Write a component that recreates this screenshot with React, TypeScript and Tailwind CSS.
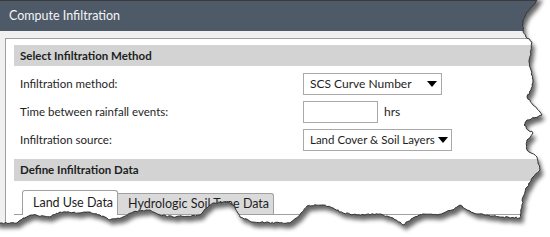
import React from 'react';

// rough outline of the torn paper edge (right side, then bottom, right to left)
const edgeKeys: [number, number][] = [
    [537, 0], [533, 6], [527, 12], [523, 20], [523, 30], [526, 37], [532, 42], [531, 50],
    [529, 62], [531, 70], [533, 80], [531, 90], [527, 97], [533, 105], [540, 112], [542, 115],
    [527, 120], [524, 125], [528, 130], [533, 133], [527, 140], [527, 150], [537, 157],
    [538, 163], [540, 170], [533, 177], [527, 187], [523, 197], [522, 207], [521, 213],
    [520, 218], [503, 217], [477, 214], [467, 210], [460, 205], [452, 210], [437, 215],
    [423, 214], [413, 218], [403, 225], [393, 218], [380, 214], [357, 215], [343, 213],
    [333, 208], [323, 205], [307, 206], [300, 215], [290, 223], [280, 223], [253, 222],
    [240, 217], [233, 205], [227, 202], [213, 203], [207, 208], [200, 215], [173, 217],
    [160, 215], [150, 210], [133, 212], [123, 217], [110, 220], [100, 215], [90, 212],
    [80, 213], [60, 212], [50, 217], [33, 215], [23, 218], [17, 223], [0, 223],
];

function rng(seed: number) {
    return () => {
        seed = (seed * 1664525 + 1013904223) % 4294967296;
        return seed / 4294967296;
    };
}

function roughen(keys: [number, number][]) {
    const rand = rng(7);
    const out: [number, number][] = [keys[0]];
    for (let i = 1; i < keys.length; i++) {
        const [x0, y0] = keys[i - 1];
        const [x1, y1] = keys[i];
        const len = Math.hypot(x1 - x0, y1 - y0);
        const n = Math.max(1, Math.round(len / 2));
        for (let k = 1; k <= n; k++) {
            const t = k / n;
            const jx = k === n ? 0 : (rand() - 0.5) * 1.4;
            const jy = k === n ? 0 : (rand() - 0.5) * 1.4;
            out.push([x0 + (x1 - x0) * t + jx, y0 + (y1 - y0) * t + jy]);
        }
    }
    return out;
}

const edge = roughen(edgeKeys);
const edgeD = 'M' + edge.map(([x, y]) => `${x.toFixed(1)} ${y.toFixed(1)}`).join(' L');
const shapeD = `M-5 -5 L540 -5 L${edge.map(([x, y]) => `${x.toFixed(1)} ${y.toFixed(1)}`).join(' L')} L-5 223 Z`;

function TornEdge() {
    return (
        <svg className="absolute inset-0 pointer-events-none" width="550" height="237" viewBox="0 0 550 237">
            <defs>
                <mask id="outside">
                    <rect x="0" y="0" width="550" height="237" fill="white" />
                    <path d={shapeD} fill="black" />
                </mask>
                <filter id="blur" x="-10%" y="-10%" width="120%" height="120%">
                    <feGaussianBlur stdDeviation="2.2" />
                </filter>
            </defs>
            <path d={`M0 0 H550 V237 H0 Z ${shapeD}`} fill="white" fillRule="evenodd" />
            <g mask="url(#outside)">
                <path d={shapeD} fill="black" opacity="0.6" transform="translate(3 5)" filter="url(#blur)" />
            </g>
            <path d={edgeD} fill="none" stroke="#333" strokeWidth="1" />
        </svg>
    );
}

function Caret() {
    return (
        <svg width="10" height="6" viewBox="0 0 10 6" className="shrink-0">
            <path d="M0 0 H10 L5 6 Z" fill="#000" />
        </svg>
    );
}

export default function App() {
    return (
        <div className="relative w-[550px] h-[237px] overflow-hidden bg-[#f0f0f0] font-['Segoe_UI','Lato',sans-serif] text-[#1e1e1e] whitespace-nowrap">
            {/* Barra de título */}
            <div className="h-[31px] bg-[#4f5a69] border-t border-[#3a3a3a] pl-[9px] flex items-center text-[12.5px] text-[#f4f4f4]">
                Compute Infiltration
            </div>

            <div className="pt-[7px] pl-[5px]">
                <div className="h-[200px] bg-white border-l border-t border-[#a0a0a0] pl-[8px] pt-[6px]">
                    <div className="h-[21px] bg-[#d3d3d3] px-[6px] flex items-center text-[11.5px] font-bold">
                        Select Infiltration Method
                    </div>

                    <div className="mt-[7px] pl-[6px] flex items-center text-[11.5px]">
                        <div className="w-[283px]">Infiltration method:</div>
                        <div className="w-[139px] h-[22px] border border-[#a9a9a9] bg-white flex items-center justify-between pl-[6px] pr-[4px] text-[12px]">
                            <span>SCS Curve Number</span>
                            <Caret />
                        </div>
                    </div>

                    <div className="mt-[6px] pl-[6px] flex items-center text-[11.5px]">
                        <div className="w-[283px]">Time between rainfall events:</div>
                        <div className="w-[75px] h-[22px] border border-[#a9a9a9] bg-white" />
                        <div className="ml-[6px] text-[12px]">hrs</div>
                    </div>

                    <div className="mt-[6px] pl-[6px] flex items-center text-[11.5px]">
                        <div className="w-[283px]">Infiltration source:</div>
                        <div className="w-[149px] h-[22px] border border-[#a9a9a9] bg-white flex items-center justify-between pl-[6px] pr-[3px] text-[11.5px]">
                            <span>Land Cover &amp; Soil Layers</span>
                            <Caret />
                        </div>
                    </div>

                    <div className="mt-[8px] h-[22px] bg-[#d3d3d3] px-[6px] flex items-center text-[11.5px] font-bold">
                        Define Infiltration Data
                    </div>

                    {/* Pestañas */}
                    <div className="mt-[10px] flex items-end border-b border-[#a0a0a0] h-[24px] text-[12.5px]">
                        <div className="ml-[8px] w-[96px] h-[25px] -mb-px bg-white border border-b-0 border-[#a0a0a0] rounded-t-[3px] pl-[10px] flex items-center">
                            Land Use Data
                        </div>
                        <div className="w-[156px] h-[21px] bg-[#dadada] border border-b-0 border-l-0 border-[#a0a0a0] rounded-tr-[3px] pl-[10px] flex items-center">
                            Hydrologic Soil Type Data
                        </div>
                    </div>
                </div>
            </div>

            <TornEdge />
        </div>
    );
}
